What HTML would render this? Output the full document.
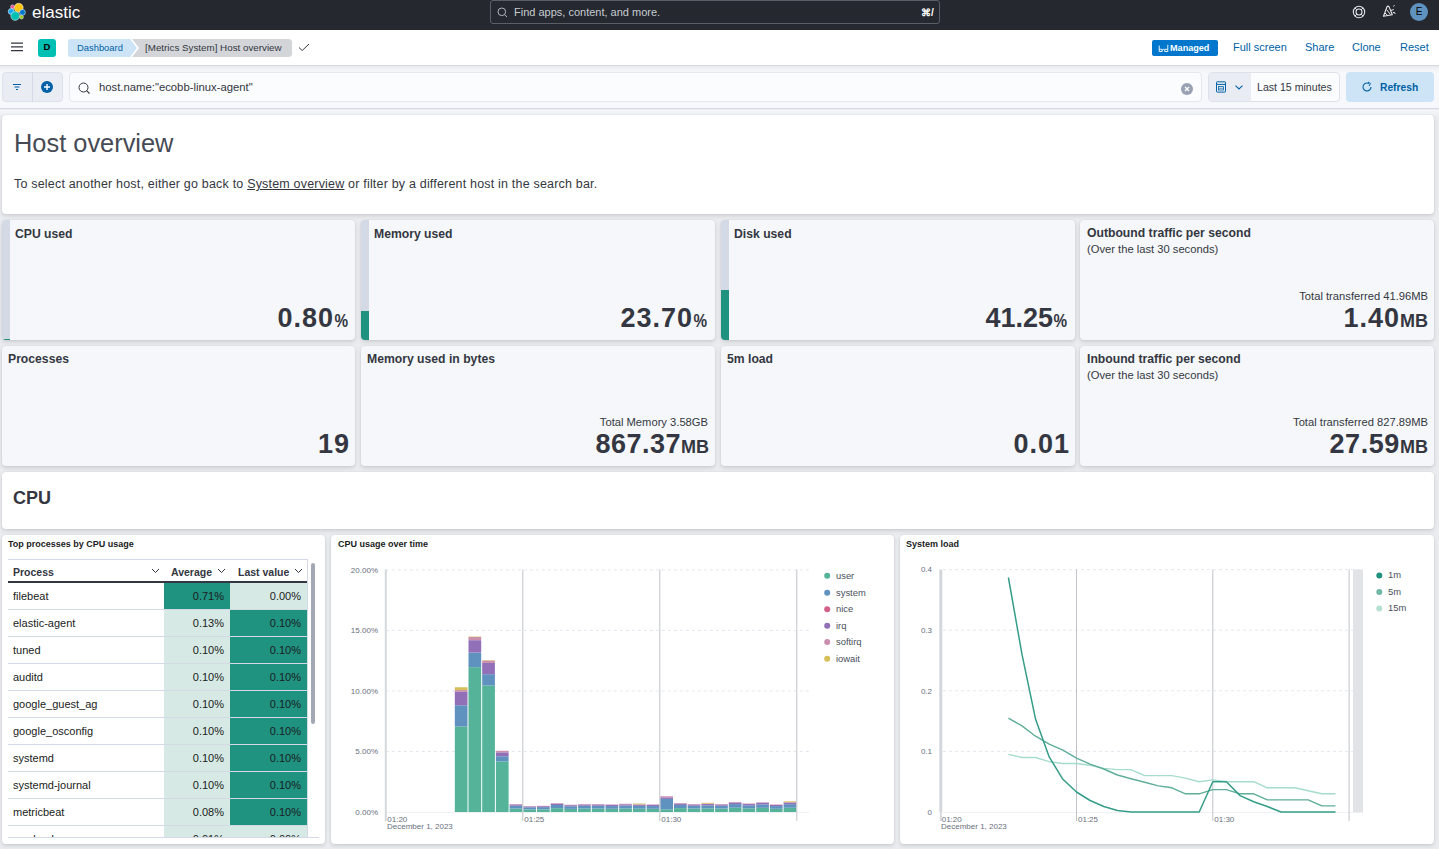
<!DOCTYPE html>
<html><head><meta charset="utf-8">
<style>
*{box-sizing:border-box;margin:0;padding:0}
html,body{width:1439px;height:849px;overflow:hidden}
body{font-family:"Liberation Sans",sans-serif;background:#eaecf0;position:relative;color:#343741}
.a{position:absolute}
.hdr{left:0;top:0;width:1439px;height:30px;background:#25282f}
.bar2{left:0;top:30px;width:1439px;height:36px;background:#fff;border-bottom:1px solid #d3dae6;}
.fbar{left:0;top:66px;width:1439px;height:43px;background:linear-gradient(#e9eaee,#f3f4f7 4px,#f7f8fc 7px);border-bottom:1px solid #d3dae6}
.panel{background:#fff;border-radius:4px;box-shadow:0 2px 4px rgba(0,0,0,.12),0 0 1.5px rgba(0,0,0,.1)}
.mp{background:#f5f7fa;border-radius:4px;box-shadow:0 2px 4px rgba(0,0,0,.13),0 0 1.5px rgba(0,0,0,.1);overflow:hidden}
.mt{position:absolute;font-weight:bold;font-size:12.2px;color:#343741;white-space:nowrap}
.mv{position:absolute;font-weight:bold;font-size:27px;color:#343741;white-space:nowrap;text-align:right}
.mv{letter-spacing:1px}
.mv small{font-size:18px;letter-spacing:0}
.mv .pc{display:inline-block;margin-left:-2px;transform:scaleX(.85);transform-origin:100% 50%}
.sub{position:absolute;font-size:11.2px;color:#343741;white-space:nowrap}
.link{position:absolute;font-size:11px;color:#0061a6;white-space:nowrap}
.th{position:absolute;top:566px;font-size:10.5px;font-weight:bold;color:#343741;white-space:nowrap}
.td{position:absolute;font-size:11px;color:#1a1c21;white-space:nowrap}
</style></head><body>

<!-- header -->
<div class="a hdr"></div>
<svg class="a" style="left:7px;top:2px" width="20" height="20" viewBox="0 0 20 20">
  <g stroke="#fff" stroke-width=".5">
  <circle cx="11.7" cy="5.8" r="4.5" fill="#fec514"/>
  <circle cx="5.5" cy="4.8" r="1.9" fill="#f04e98"/>
  <circle cx="4.2" cy="9.5" r="3" fill="#1ba9f5"/>
  <circle cx="15.5" cy="10.4" r="2.9" fill="#0077cc"/>
  <circle cx="8.2" cy="14" r="4.4" fill="#00bfb3"/>
  <circle cx="14.5" cy="15.1" r="1.9" fill="#93c90e"/>
  </g>
</svg>
<div class="a" style="left:32px;top:3px;font-size:17px;color:#fff;letter-spacing:0px">elastic</div>

<div class="a" style="left:490px;top:0px;width:450px;height:24px;border:1px solid #5a5e66;border-radius:3px;background:#25282f"></div>
<svg class="a" style="left:497px;top:7px" width="11" height="11" viewBox="0 0 11 11"><circle cx="4.8" cy="4.8" r="3.8" fill="none" stroke="#b0b4bc" stroke-width="1"/><path d="M7.6 7.6L10 10" stroke="#b0b4bc" stroke-width="1"/></svg>
<div class="a" style="left:514px;top:6px;font-size:11px;color:#c8ccd2">Find apps, content, and more.</div>
<div class="a" style="left:921px;top:7px;font-size:10px;color:#fff;font-weight:bold">&#8984;/</div>

<svg class="a" style="left:1352px;top:5px" width="14" height="14" viewBox="0 0 14 14"><circle cx="7" cy="7" r="5.7" fill="none" stroke="#dfe2e6" stroke-width="1.1"/><circle cx="7" cy="7" r="3" fill="none" stroke="#dfe2e6" stroke-width="1.1"/><path d="M3 3L4.9 4.9M11 3L9.1 4.9M3 11L4.9 9.1M11 11L9.1 9.1" stroke="#dfe2e6" stroke-width="1"/></svg>
<svg class="a" style="left:1380px;top:3px" width="18" height="18" viewBox="1380 3 18 18"><path d="M1383.5 16.3L1387 6.8Q1388 5.6 1389 6.6L1392.3 14.8Z" fill="none" stroke="#e6e8eb" stroke-width="1.1" stroke-linejoin="round"/><path d="M1386.5 9.5L1390.5 14.5M1385 13L1387.8 15.6" stroke="#e6e8eb" stroke-width="1"/><path d="M1391 10.3L1393.8 9.6M1393.2 6.3L1394.6 5.5M1392.8 12.6Q1395 11.5 1395.2 14" fill="none" stroke="#e6e8eb" stroke-width="1"/></svg>
<div class="a" style="left:1410px;top:3px;width:18px;height:18px;border-radius:50%;background:#6092c0;color:#000;font-size:10px;text-align:center;line-height:18px">E</div>

<!-- bar2 -->
<div class="a bar2"></div>
<svg class="a" style="left:10px;top:40px" width="14" height="14" viewBox="10 40 14 14"><path d="M11 43.2H23M11 46.8H23M11 50.6H23" stroke="#343741" stroke-width="1.2"/></svg>
<div class="a" style="left:38px;top:39px;width:18px;height:18px;border-radius:3px;background:#00bfb3;color:#000;font-size:9.5px;font-weight:bold;text-align:center;line-height:15.6px">D</div>
<svg class="a" style="left:68px;top:39px" width="225" height="18" viewBox="0 0 225 18">
  <path d="M3 0H62L69 9L62 18H3Q0 18 0 15V3Q0 0 3 0Z" fill="#cce4f5"/>
  <path d="M64 0H220Q224 0 224 3V15Q224 18 220 18H64L71 9Z" fill="#d3d5d9"/>
</svg>
<div class="a" style="left:77px;top:42px;font-size:9.4px;color:#0061a6">Dashboard</div>
<div class="a" style="left:145px;top:42px;font-size:9.8px;color:#343741">[Metrics System] Host overview</div>
<svg class="a" style="left:298px;top:43px" width="12" height="9" viewBox="0 0 12 9"><path d="M1 4.5L4.2 7.5L11 1" fill="none" stroke="#343741" stroke-width="1"/></svg>

<div class="a" style="left:1152px;top:40px;width:66px;height:16px;border-radius:2px;background:#0077cc"></div>
<svg class="a" style="left:1158px;top:44px" width="11" height="9" viewBox="0 0 11 9"><path d="M1.2 1.5V7.5H4.2V5.3H1.2M9.8 0.8V7.5H6.8V5.3H9.8M4.2 6.2L5.5 5.3L6.8 6.2" fill="none" stroke="#fff" stroke-width=".9"/></svg>
<div class="a" style="left:1170px;top:42px;font-size:9.1px;color:#fff;font-weight:bold;top:43px">Managed</div>
<div class="link" style="left:1233px;top:41px">Full screen</div>
<div class="link" style="left:1305px;top:41px">Share</div>
<div class="link" style="left:1352px;top:41px">Clone</div>
<div class="link" style="left:1400px;top:41px">Reset</div>

<!-- filter bar -->
<div class="a fbar"></div>
<div class="a" style="left:2px;top:72px;width:61px;height:30px;border:1px solid #dde2ea;border-radius:4px;background:#e9edf3"></div>
<div class="a" style="left:32px;top:72px;width:1px;height:30px;background:#d3dae6"></div>
<svg class="a" style="left:12px;top:82px" width="10" height="10" viewBox="0 0 10 10"><path d="M1 2.5H9M2.5 5H7.5M4 7.5H6" stroke="#0061a6" stroke-width="1"/></svg>
<svg class="a" style="left:41px;top:81px" width="12" height="12" viewBox="0 0 12 12"><circle cx="6" cy="6" r="6" fill="#0061a6"/><path d="M6 3V9M3 6H9" stroke="#fff" stroke-width="1.4"/></svg>

<div class="a" style="left:69px;top:72px;width:1133px;height:30px;border:1px solid #e3e7ee;border-radius:4px;background:#fbfcfd"></div>
<svg class="a" style="left:78px;top:82px" width="13" height="13" viewBox="0 0 13 13"><circle cx="5.5" cy="5.5" r="4.5" fill="none" stroke="#343741" stroke-width="1"/><path d="M8.6 8.6L11.5 11.5" stroke="#343741" stroke-width="1.1"/></svg>
<div class="a" style="left:99px;top:81px;font-size:11.3px;color:#343741">host.name:"ecobb-linux-agent"</div>
<svg class="a" style="left:1181px;top:83px" width="12" height="12" viewBox="0 0 12 12"><circle cx="6" cy="6" r="6" fill="#98a2b3"/><path d="M4 4L8 8M8 4L4 8" stroke="#fff" stroke-width="1.3"/></svg>

<div class="a" style="left:1208px;top:72px;width:132px;height:30px;border:1px solid #dde2ea;border-radius:4px;background:#fbfcfd;overflow:hidden"><div class="a" style="left:0;top:0;width:42px;height:30px;background:#e9edf3"></div></div>
<svg class="a" style="left:1210px;top:76px" width="40" height="20" viewBox="1210 76 40 20"><rect x="1216.5" y="81.8" width="9" height="10.3" rx=".6" fill="none" stroke="#0061a6" stroke-width="1"/><path d="M1216.5 84.4H1225.5" stroke="#0061a6" stroke-width="1"/><rect x="1218.6" y="86.6" width="4.8" height="3.4" fill="none" stroke="#0061a6" stroke-width=".8"/><path d="M1218.6 88.3H1223.4" stroke="#0061a6" stroke-width=".6"/><path d="M1235.5 85.6L1239 88.9L1242.5 85.6" fill="none" stroke="#0061a6" stroke-width="1.1"/></svg>
<div class="a" style="left:1257px;top:81px;font-size:10.6px;color:#343741">Last 15 minutes</div>
<div class="a" style="left:1346px;top:72px;width:88px;height:30px;border-radius:4px;background:#cce4f5"></div>
<svg class="a" style="left:1361px;top:81px" width="12" height="12" viewBox="0 0 12 12"><path d="M10 6A4 4 0 1 1 8 2.5" fill="none" stroke="#0061a6" stroke-width="1.1"/><path d="M7 1L9.5 2.5L8 5" fill="none" stroke="#0061a6" stroke-width="1"/></svg>
<div class="a" style="left:1380px;top:82px;font-size:10.25px;color:#0061a6;font-weight:bold">Refresh</div>

<!-- host overview panel -->
<div class="a" style="left:0;top:110px;width:1439px;height:6px;background:linear-gradient(#f5f6f9,#eceef2)"></div>
<div class="a panel" style="left:2px;top:115px;width:1432px;height:99px"></div>
<div class="a" style="left:14px;top:129px;font-size:25.4px;color:#464a54">Host overview</div>
<div class="a" style="left:14px;top:177px;font-size:12.5px;letter-spacing:0.19px;color:#343741">To select another host, either go back to <span style="text-decoration:underline">System overview</span> or filter by a different host in the search bar.</div>


<!-- metric row 1 -->
<div class="a mp" style="left:2px;top:220px;width:353px;height:120px">
  <div class="a" style="left:0;top:0;width:8px;height:120px;background:#d3dae6"></div>
  <div class="a" style="left:0;top:119px;width:8px;height:1px;background:#209280"></div>
</div>
<div class="mt" style="left:15px;top:227px">CPU used</div>
<div class="mv" style="right:1091px;top:303px">0.80<small class="pc">%</small></div>

<div class="a mp" style="left:361px;top:220px;width:354px;height:120px">
  <div class="a" style="left:0;top:0;width:8px;height:120px;background:#d3dae6"></div>
  <div class="a" style="left:0;top:91px;width:8px;height:29px;background:#209280"></div>
</div>
<div class="mt" style="left:374px;top:227px">Memory used</div>
<div class="mv" style="right:732px;top:303px">23.70<small class="pc">%</small></div>

<div class="a mp" style="left:721px;top:220px;width:354px;height:120px">
  <div class="a" style="left:0;top:0;width:8px;height:120px;background:#d3dae6"></div>
  <div class="a" style="left:0;top:70px;width:8px;height:50px;background:#209280"></div>
</div>
<div class="mt" style="left:734px;top:226.5px">Disk used</div>
<div class="mv" style="right:372px;top:303px;letter-spacing:0">41.25<small class="pc">%</small></div>

<div class="a mp" style="left:1080px;top:220px;width:354px;height:120px"></div>
<div class="mt" style="left:1087px;top:226px">Outbound traffic per second</div>
<div class="sub" style="left:1087px;top:243px">(Over the last 30 seconds)</div>
<div class="sub" style="right:11px;top:290px">Total transferred 41.96MB</div>
<div class="mv" style="right:11px;top:303px">1.40<small>MB</small></div>

<!-- metric row 2 -->
<div class="a mp" style="left:2px;top:346px;width:353px;height:120px"></div>
<div class="mt" style="left:8px;top:352px">Processes</div>
<div class="mv" style="right:1089px;top:429px">19</div>

<div class="a mp" style="left:361px;top:346px;width:354px;height:120px"></div>
<div class="mt" style="left:367px;top:352px">Memory used in bytes</div>
<div class="sub" style="right:731px;top:416px">Total Memory 3.58GB</div>
<div class="mv" style="right:730px;top:429px;letter-spacing:0.5px">867.37<small>MB</small></div>

<div class="a mp" style="left:721px;top:346px;width:354px;height:120px"></div>
<div class="mt" style="left:727px;top:352px">5m load</div>
<div class="mv" style="right:369px;top:429px">0.01</div>

<div class="a mp" style="left:1080px;top:346px;width:354px;height:120px"></div>
<div class="mt" style="left:1087px;top:352px">Inbound traffic per second</div>
<div class="sub" style="left:1087px;top:369px">(Over the last 30 seconds)</div>
<div class="sub" style="right:11px;top:416px">Total transferred 827.89MB</div>
<div class="mv" style="right:11px;top:429px;letter-spacing:0.6px">27.59<small>MB</small></div>

<!-- CPU header panel -->
<div class="a panel" style="left:2px;top:472px;width:1432px;height:57px"></div>
<div class="a" style="left:13px;top:488px;font-size:18px;font-weight:bold;color:#343741">CPU</div>

<!-- bottom panels -->
<div class="a panel" style="left:2px;top:535px;width:323px;height:309px"></div>
<div class="a panel" style="left:331px;top:535px;width:563px;height:309px"></div>
<div class="a panel" style="left:900px;top:535px;width:534px;height:309px"></div>
<div class="mt" style="left:8px;top:539px;font-size:9px;color:#1a1c21">Top processes by CPU usage</div>
<div class="mt" style="left:338px;top:539px;font-size:9px;color:#1a1c21">CPU usage over time</div>
<div class="mt" style="left:906px;top:539px;font-size:9px;color:#1a1c21">System load</div>

<!-- table -->
<div class="a" style="left:8px;top:559px;width:300px;height:1px;background:#d3dae6"></div>
<div class="a" style="left:307px;top:559px;width:1px;height:279px;background:#d3dae6"></div>
<div class="th" style="left:13px">Process</div>
<svg class="a" style="left:151px;top:568px" width="9" height="6" viewBox="0 0 9 6"><path d="M1 1L4.5 4.5L8 1" fill="none" stroke="#343741" stroke-width="1"/></svg>
<div class="th" style="left:171px">Average</div>
<svg class="a" style="left:217px;top:568px" width="9" height="6" viewBox="0 0 9 6"><path d="M1 1L4.5 4.5L8 1" fill="none" stroke="#343741" stroke-width="1"/></svg>
<div class="th" style="left:238px">Last value</div>
<svg class="a" style="left:294px;top:568px" width="9" height="6" viewBox="0 0 9 6"><path d="M1 1L4.5 4.5L8 1" fill="none" stroke="#343741" stroke-width="1"/></svg>
<div class="a" style="left:8px;top:581px;width:299px;height:2px;background:#343741"></div>
<div class="a" style="left:8px;top:583px;width:299px;height:254px;overflow:hidden">
<div class="a" style="left:0;top:26px;width:299px;height:1px;background:#d3dae6"></div>
<div class="a" style="left:156px;top:0px;width:66px;height:26px;background:#209280"></div>
<div class="a" style="left:222px;top:0px;width:77px;height:26px;background:#d6e9e4"></div>
<div class="td" style="left:5px;top:7px">filebeat</div>
<div class="td" style="right:83px;top:7px">0.71%</div>
<div class="td" style="right:6px;top:7px">0.00%</div>
<div class="a" style="left:0;top:53px;width:299px;height:1px;background:#d3dae6"></div>
<div class="a" style="left:156px;top:27px;width:66px;height:26px;background:#d6e9e4"></div>
<div class="a" style="left:222px;top:27px;width:77px;height:26px;background:#209280"></div>
<div class="td" style="left:5px;top:34px">elastic-agent</div>
<div class="td" style="right:83px;top:34px">0.13%</div>
<div class="td" style="right:6px;top:34px">0.10%</div>
<div class="a" style="left:0;top:80px;width:299px;height:1px;background:#d3dae6"></div>
<div class="a" style="left:156px;top:54px;width:66px;height:26px;background:#d6e9e4"></div>
<div class="a" style="left:222px;top:54px;width:77px;height:26px;background:#209280"></div>
<div class="td" style="left:5px;top:61px">tuned</div>
<div class="td" style="right:83px;top:61px">0.10%</div>
<div class="td" style="right:6px;top:61px">0.10%</div>
<div class="a" style="left:0;top:107px;width:299px;height:1px;background:#d3dae6"></div>
<div class="a" style="left:156px;top:81px;width:66px;height:26px;background:#d6e9e4"></div>
<div class="a" style="left:222px;top:81px;width:77px;height:26px;background:#209280"></div>
<div class="td" style="left:5px;top:88px">auditd</div>
<div class="td" style="right:83px;top:88px">0.10%</div>
<div class="td" style="right:6px;top:88px">0.10%</div>
<div class="a" style="left:0;top:134px;width:299px;height:1px;background:#d3dae6"></div>
<div class="a" style="left:156px;top:108px;width:66px;height:26px;background:#d6e9e4"></div>
<div class="a" style="left:222px;top:108px;width:77px;height:26px;background:#209280"></div>
<div class="td" style="left:5px;top:115px">google_guest_ag</div>
<div class="td" style="right:83px;top:115px">0.10%</div>
<div class="td" style="right:6px;top:115px">0.10%</div>
<div class="a" style="left:0;top:161px;width:299px;height:1px;background:#d3dae6"></div>
<div class="a" style="left:156px;top:135px;width:66px;height:26px;background:#d6e9e4"></div>
<div class="a" style="left:222px;top:135px;width:77px;height:26px;background:#209280"></div>
<div class="td" style="left:5px;top:142px">google_osconfig</div>
<div class="td" style="right:83px;top:142px">0.10%</div>
<div class="td" style="right:6px;top:142px">0.10%</div>
<div class="a" style="left:0;top:188px;width:299px;height:1px;background:#d3dae6"></div>
<div class="a" style="left:156px;top:162px;width:66px;height:26px;background:#d6e9e4"></div>
<div class="a" style="left:222px;top:162px;width:77px;height:26px;background:#209280"></div>
<div class="td" style="left:5px;top:169px">systemd</div>
<div class="td" style="right:83px;top:169px">0.10%</div>
<div class="td" style="right:6px;top:169px">0.10%</div>
<div class="a" style="left:0;top:215px;width:299px;height:1px;background:#d3dae6"></div>
<div class="a" style="left:156px;top:189px;width:66px;height:26px;background:#d6e9e4"></div>
<div class="a" style="left:222px;top:189px;width:77px;height:26px;background:#209280"></div>
<div class="td" style="left:5px;top:196px">systemd-journal</div>
<div class="td" style="right:83px;top:196px">0.10%</div>
<div class="td" style="right:6px;top:196px">0.10%</div>
<div class="a" style="left:0;top:242px;width:299px;height:1px;background:#d3dae6"></div>
<div class="a" style="left:156px;top:216px;width:66px;height:26px;background:#d6e9e4"></div>
<div class="a" style="left:222px;top:216px;width:77px;height:26px;background:#209280"></div>
<div class="td" style="left:5px;top:223px">metricbeat</div>
<div class="td" style="right:83px;top:223px">0.08%</div>
<div class="td" style="right:6px;top:223px">0.10%</div>
<div class="a" style="left:0;top:269px;width:299px;height:1px;background:#d3dae6"></div>
<div class="a" style="left:156px;top:243px;width:66px;height:26px;background:#d6e9e4"></div>
<div class="a" style="left:222px;top:243px;width:77px;height:26px;background:#d6e9e4"></div>
<div class="td" style="left:5px;top:250px">rsyslogd</div>
<div class="td" style="right:83px;top:250px">0.01%</div>
<div class="td" style="right:6px;top:250px">0.00%</div>
</div>
<div class="a" style="left:8px;top:837px;width:311px;height:1px;background:#d3dae6"></div>
<div class="a" style="left:311px;top:563px;width:4px;height:161px;border-radius:2px;background:#a2a9b4"></div>
<!-- cpu chart -->
<svg class="a" style="left:331px;top:535px" width="563" height="309" viewBox="331 535 563 309">
<line x1="385.8" y1="570.0" x2="809" y2="570.0" stroke="#e4e7ed" stroke-width="1" stroke-dasharray="3 3"/>
<text x="378" y="572.8" text-anchor="end" font-size="8" fill="#69707d">20.00%</text>
<line x1="385.8" y1="630.5" x2="809" y2="630.5" stroke="#e4e7ed" stroke-width="1" stroke-dasharray="3 3"/>
<text x="378" y="633.3" text-anchor="end" font-size="8" fill="#69707d">15.00%</text>
<line x1="385.8" y1="691.0" x2="809" y2="691.0" stroke="#e4e7ed" stroke-width="1" stroke-dasharray="3 3"/>
<text x="378" y="693.8" text-anchor="end" font-size="8" fill="#69707d">10.00%</text>
<line x1="385.8" y1="751.5" x2="809" y2="751.5" stroke="#e4e7ed" stroke-width="1" stroke-dasharray="3 3"/>
<text x="378" y="754.3" text-anchor="end" font-size="8" fill="#69707d">5.00%</text>
<line x1="385.8" y1="812.5" x2="809" y2="812.5" stroke="#eef0f3" stroke-width="1"/>
<text x="378" y="814.8" text-anchor="end" font-size="8" fill="#69707d">0.00%</text>
<rect x="454.80" y="726.45" width="12.70" height="85.55" fill="#54b399"/>
<rect x="454.80" y="705.28" width="12.70" height="21.18" fill="#6092c0"/>
<rect x="454.80" y="691.85" width="12.70" height="13.43" fill="#9170b8"/>
<rect x="454.80" y="690.03" width="12.70" height="1.82" fill="#ca8eae"/>
<rect x="454.80" y="687.25" width="12.70" height="2.78" fill="#d6bf57"/>
<rect x="468.50" y="667.16" width="12.70" height="144.84" fill="#54b399"/>
<rect x="468.50" y="652.52" width="12.70" height="14.64" fill="#6092c0"/>
<rect x="468.50" y="640.18" width="12.70" height="12.34" fill="#9170b8"/>
<rect x="468.50" y="637.03" width="12.70" height="3.15" fill="#ca8eae"/>
<rect x="468.50" y="636.55" width="12.70" height="0.48" fill="#d6bf57"/>
<rect x="482.20" y="685.56" width="12.70" height="126.44" fill="#54b399"/>
<rect x="482.20" y="674.18" width="12.70" height="11.37" fill="#6092c0"/>
<rect x="482.20" y="662.93" width="12.70" height="11.25" fill="#9170b8"/>
<rect x="482.20" y="660.51" width="12.70" height="2.42" fill="#ca8eae"/>
<rect x="482.20" y="660.14" width="12.70" height="0.36" fill="#d6bf57"/>
<rect x="495.90" y="761.42" width="12.70" height="50.58" fill="#54b399"/>
<rect x="495.90" y="756.22" width="12.70" height="5.20" fill="#6092c0"/>
<rect x="495.90" y="752.35" width="12.70" height="3.87" fill="#9170b8"/>
<rect x="495.90" y="750.77" width="12.70" height="1.57" fill="#ca8eae"/>
<rect x="509.60" y="808.57" width="12.70" height="3.43" fill="#54b399"/>
<rect x="509.60" y="805.69" width="12.70" height="2.87" fill="#6092c0"/>
<rect x="509.60" y="804.49" width="12.70" height="1.20" fill="#9170b8"/>
<rect x="509.60" y="804.01" width="12.70" height="0.48" fill="#ca8eae"/>
<rect x="523.30" y="809.45" width="12.70" height="2.55" fill="#54b399"/>
<rect x="523.30" y="807.32" width="12.70" height="2.13" fill="#6092c0"/>
<rect x="523.30" y="806.43" width="12.70" height="0.89" fill="#9170b8"/>
<rect x="523.30" y="806.07" width="12.70" height="0.36" fill="#ca8eae"/>
<rect x="537.00" y="809.35" width="12.70" height="2.65" fill="#54b399"/>
<rect x="537.00" y="807.12" width="12.70" height="2.22" fill="#6092c0"/>
<rect x="537.00" y="806.20" width="12.70" height="0.93" fill="#9170b8"/>
<rect x="537.00" y="805.83" width="12.70" height="0.37" fill="#ca8eae"/>
<rect x="550.70" y="808.20" width="12.70" height="3.80" fill="#54b399"/>
<rect x="550.70" y="805.02" width="12.70" height="3.18" fill="#6092c0"/>
<rect x="550.70" y="803.70" width="12.70" height="1.32" fill="#9170b8"/>
<rect x="550.70" y="803.17" width="12.70" height="0.53" fill="#ca8eae"/>
<rect x="564.40" y="808.88" width="12.70" height="3.12" fill="#54b399"/>
<rect x="564.40" y="806.26" width="12.70" height="2.61" fill="#6092c0"/>
<rect x="564.40" y="805.18" width="12.70" height="1.09" fill="#9170b8"/>
<rect x="564.40" y="804.74" width="12.70" height="0.44" fill="#ca8eae"/>
<rect x="578.10" y="808.57" width="12.70" height="3.43" fill="#54b399"/>
<rect x="578.10" y="805.69" width="12.70" height="2.87" fill="#6092c0"/>
<rect x="578.10" y="804.49" width="12.70" height="1.20" fill="#9170b8"/>
<rect x="578.10" y="804.01" width="12.70" height="0.48" fill="#ca8eae"/>
<rect x="591.80" y="808.57" width="12.70" height="3.43" fill="#54b399"/>
<rect x="591.80" y="805.69" width="12.70" height="2.87" fill="#6092c0"/>
<rect x="591.80" y="804.49" width="12.70" height="1.20" fill="#9170b8"/>
<rect x="591.80" y="804.01" width="12.70" height="0.48" fill="#ca8eae"/>
<rect x="605.50" y="808.77" width="12.70" height="3.23" fill="#54b399"/>
<rect x="605.50" y="806.07" width="12.70" height="2.70" fill="#6092c0"/>
<rect x="605.50" y="804.95" width="12.70" height="1.13" fill="#9170b8"/>
<rect x="605.50" y="804.50" width="12.70" height="0.45" fill="#ca8eae"/>
<rect x="619.20" y="808.46" width="12.70" height="3.54" fill="#54b399"/>
<rect x="619.20" y="805.50" width="12.70" height="2.96" fill="#6092c0"/>
<rect x="619.20" y="804.27" width="12.70" height="1.23" fill="#9170b8"/>
<rect x="619.20" y="803.77" width="12.70" height="0.49" fill="#ca8eae"/>
<rect x="632.90" y="808.67" width="12.70" height="3.33" fill="#54b399"/>
<rect x="632.90" y="805.88" width="12.70" height="2.79" fill="#6092c0"/>
<rect x="632.90" y="804.72" width="12.70" height="1.16" fill="#9170b8"/>
<rect x="632.90" y="804.26" width="12.70" height="0.46" fill="#ca8eae"/>
<rect x="632.90" y="803.53" width="12.70" height="0.73" fill="#d6bf57"/>
<rect x="646.60" y="808.77" width="12.70" height="3.23" fill="#54b399"/>
<rect x="646.60" y="806.07" width="12.70" height="2.70" fill="#6092c0"/>
<rect x="646.60" y="804.95" width="12.70" height="1.13" fill="#9170b8"/>
<rect x="646.60" y="804.50" width="12.70" height="0.45" fill="#ca8eae"/>
<rect x="660.30" y="809.34" width="12.70" height="2.66" fill="#54b399"/>
<rect x="660.30" y="798.93" width="12.70" height="10.41" fill="#6092c0"/>
<rect x="660.30" y="797.36" width="12.70" height="1.57" fill="#9170b8"/>
<rect x="660.30" y="796.27" width="12.70" height="1.09" fill="#ca8eae"/>
<rect x="674.00" y="808.15" width="12.70" height="3.85" fill="#54b399"/>
<rect x="674.00" y="804.93" width="12.70" height="3.22" fill="#6092c0"/>
<rect x="674.00" y="803.58" width="12.70" height="1.34" fill="#9170b8"/>
<rect x="674.00" y="803.05" width="12.70" height="0.54" fill="#ca8eae"/>
<rect x="687.70" y="808.57" width="12.70" height="3.43" fill="#54b399"/>
<rect x="687.70" y="805.69" width="12.70" height="2.87" fill="#6092c0"/>
<rect x="687.70" y="804.49" width="12.70" height="1.20" fill="#9170b8"/>
<rect x="687.70" y="804.01" width="12.70" height="0.48" fill="#ca8eae"/>
<rect x="701.40" y="808.36" width="12.70" height="3.64" fill="#54b399"/>
<rect x="701.40" y="805.31" width="12.70" height="3.05" fill="#6092c0"/>
<rect x="701.40" y="804.04" width="12.70" height="1.27" fill="#9170b8"/>
<rect x="701.40" y="803.53" width="12.70" height="0.51" fill="#ca8eae"/>
<rect x="701.40" y="802.80" width="12.70" height="0.73" fill="#d6bf57"/>
<rect x="715.10" y="808.57" width="12.70" height="3.43" fill="#54b399"/>
<rect x="715.10" y="805.69" width="12.70" height="2.87" fill="#6092c0"/>
<rect x="715.10" y="804.49" width="12.70" height="1.20" fill="#9170b8"/>
<rect x="715.10" y="804.01" width="12.70" height="0.48" fill="#ca8eae"/>
<rect x="728.80" y="807.68" width="12.70" height="4.32" fill="#54b399"/>
<rect x="728.80" y="804.07" width="12.70" height="3.62" fill="#6092c0"/>
<rect x="728.80" y="802.56" width="12.70" height="1.51" fill="#9170b8"/>
<rect x="728.80" y="801.96" width="12.70" height="0.60" fill="#ca8eae"/>
<rect x="742.50" y="808.36" width="12.70" height="3.64" fill="#54b399"/>
<rect x="742.50" y="805.31" width="12.70" height="3.05" fill="#6092c0"/>
<rect x="742.50" y="804.04" width="12.70" height="1.27" fill="#9170b8"/>
<rect x="742.50" y="803.53" width="12.70" height="0.51" fill="#ca8eae"/>
<rect x="756.20" y="807.84" width="12.70" height="4.16" fill="#54b399"/>
<rect x="756.20" y="804.35" width="12.70" height="3.48" fill="#6092c0"/>
<rect x="756.20" y="802.90" width="12.70" height="1.45" fill="#9170b8"/>
<rect x="756.20" y="802.32" width="12.70" height="0.58" fill="#ca8eae"/>
<rect x="769.90" y="808.77" width="12.70" height="3.23" fill="#54b399"/>
<rect x="769.90" y="806.07" width="12.70" height="2.70" fill="#6092c0"/>
<rect x="769.90" y="804.95" width="12.70" height="1.13" fill="#9170b8"/>
<rect x="769.90" y="804.50" width="12.70" height="0.45" fill="#ca8eae"/>
<rect x="783.60" y="807.73" width="12.70" height="4.27" fill="#54b399"/>
<rect x="783.60" y="804.16" width="12.70" height="3.57" fill="#6092c0"/>
<rect x="783.60" y="802.67" width="12.70" height="1.49" fill="#9170b8"/>
<rect x="783.60" y="802.08" width="12.70" height="0.60" fill="#ca8eae"/>
<rect x="783.60" y="801.35" width="12.70" height="0.73" fill="#d6bf57"/>
<line x1="385.8" y1="569.5" x2="385.8" y2="821" stroke="#d5d8dd" stroke-width="2"/>
<line x1="522.8" y1="569.5" x2="522.8" y2="821" stroke="#c0c3c8" stroke-width="1"/>
<line x1="659.8" y1="569.5" x2="659.8" y2="821" stroke="#c0c3c8" stroke-width="1"/>
<line x1="796.8" y1="569.5" x2="796.8" y2="821" stroke="#c0c3c8" stroke-width="1"/>
<text x="387.3" y="822" font-size="8" fill="#69707d">01:20</text>
<text x="524.3" y="822" font-size="8" fill="#69707d">01:25</text>
<text x="661.3" y="822" font-size="8" fill="#69707d">01:30</text>
<text x="387" y="829" font-size="8" fill="#69707d">December 1, 2023</text>
<circle cx="827.2" cy="575.8" r="3" fill="#54b399"/>
<text x="836" y="578.8" font-size="9.4" fill="#4a4f5a">user</text>
<circle cx="827.2" cy="592.8" r="3" fill="#6092c0"/>
<text x="836" y="595.8" font-size="9.4" fill="#4a4f5a">system</text>
<circle cx="827.2" cy="609.2" r="3" fill="#d36086"/>
<text x="836" y="612.2" font-size="9.4" fill="#4a4f5a">nice</text>
<circle cx="827.2" cy="625.8" r="3" fill="#9170b8"/>
<text x="836" y="628.8" font-size="9.4" fill="#4a4f5a">irq</text>
<circle cx="827.2" cy="642" r="3" fill="#ca8eae"/>
<text x="836" y="645" font-size="9.4" fill="#4a4f5a">softirq</text>
<circle cx="827.2" cy="658.8" r="3" fill="#d6bf57"/>
<text x="836" y="661.8" font-size="9.4" fill="#4a4f5a">iowait</text>
</svg>
<!-- load chart -->
<svg class="a" style="left:900px;top:535px" width="534" height="309" viewBox="900 535 534 309">
<line x1="943" y1="569.6" x2="1363" y2="569.6" stroke="#e4e7ed" stroke-width="1" stroke-dasharray="3 3"/>
<text x="932" y="572.4" text-anchor="end" font-size="8" fill="#69707d">0.4</text>
<line x1="943" y1="630.2" x2="1363" y2="630.2" stroke="#e4e7ed" stroke-width="1" stroke-dasharray="3 3"/>
<text x="932" y="633.0" text-anchor="end" font-size="8" fill="#69707d">0.3</text>
<line x1="943" y1="690.8" x2="1363" y2="690.8" stroke="#e4e7ed" stroke-width="1" stroke-dasharray="3 3"/>
<text x="932" y="693.5999999999999" text-anchor="end" font-size="8" fill="#69707d">0.2</text>
<line x1="943" y1="751.4" x2="1363" y2="751.4" stroke="#e4e7ed" stroke-width="1" stroke-dasharray="3 3"/>
<text x="932" y="754.1999999999999" text-anchor="end" font-size="8" fill="#69707d">0.1</text>
<line x1="943" y1="812.5" x2="1363" y2="812.5" stroke="#eef0f3" stroke-width="1"/>
<text x="932" y="814.8" text-anchor="end" font-size="8" fill="#69707d">0</text>
<rect x="939.3" y="569.5" width="3" height="242.5" fill="#d3d6db"/>
<line x1="940.8" y1="812" x2="940.8" y2="821" stroke="#d5d8dd" stroke-width="2"/>
<rect x="1353" y="569.5" width="10" height="242.5" fill="#e1e3e7"/>
<line x1="1076.5" y1="569.5" x2="1076.5" y2="821" stroke="#c0c3c8" stroke-width="1"/>
<line x1="1212.8" y1="569.5" x2="1212.8" y2="821" stroke="#c0c3c8" stroke-width="1"/>
<line x1="1349.1" y1="569.5" x2="1349.1" y2="821" stroke="#c0c3c8" stroke-width="1"/>
<text x="941.7" y="822" font-size="8" fill="#69707d">01:20</text>
<text x="1078.0" y="822" font-size="8" fill="#69707d">01:25</text>
<text x="1214.3" y="822" font-size="8" fill="#69707d">01:30</text>
<text x="941" y="829" font-size="8" fill="#69707d">December 1, 2023</text>
<path d="M1008.4 754.4 L1022.0 757.5 L1035.6 757.5 L1049.2 761.7 L1062.9 763.5 L1076.5 763.5 L1090.1 765.3 L1103.8 768.4 L1117.4 769.6 L1131.0 769.6 L1144.7 775.6 L1158.3 775.6 L1171.9 775.6 L1185.5 778.1 L1199.2 781.7 L1212.8 779.9 L1226.4 781.7 L1240.1 781.7 L1253.7 781.7 L1267.3 787.8 L1281.0 787.8 L1294.6 787.8 L1308.2 790.8 L1321.8 793.8 L1335.5 793.8" fill="none" stroke="#a6dccd" stroke-width="1.4" stroke-linejoin="round"/>
<path d="M1008.4 718.1 L1022.0 725.9 L1035.6 736.2 L1049.2 744.1 L1062.9 750.2 L1076.5 758.1 L1090.1 764.1 L1103.8 769.0 L1117.4 775.0 L1131.0 778.7 L1144.7 782.3 L1158.3 785.9 L1171.9 787.8 L1185.5 793.8 L1199.2 793.8 L1212.8 789.6 L1226.4 789.6 L1240.1 793.8 L1253.7 793.8 L1267.3 799.9 L1281.0 799.9 L1294.6 799.9 L1308.2 799.9 L1321.8 805.9 L1335.5 805.9" fill="none" stroke="#5fae9a" stroke-width="1.4" stroke-linejoin="round"/>
<path d="M1008.4 577.5 L1022.0 654.4 L1035.6 719.3 L1049.2 756.9 L1062.9 779.3 L1076.5 792.0 L1090.1 800.5 L1103.8 806.5 L1117.4 810.5 L1131.0 812.0 L1144.7 812.0 L1158.3 812.0 L1171.9 812.0 L1185.5 812.0 L1199.2 812.0 L1212.8 781.7 L1226.4 781.7 L1240.1 795.6 L1253.7 801.7 L1267.3 806.5 L1281.0 812.0 L1294.6 812.0 L1308.2 812.0 L1321.8 812.0 L1335.5 812.0" fill="none" stroke="#359d89" stroke-width="1.5" stroke-linejoin="round"/>
<circle cx="1379.3" cy="575.4" r="3" fill="#209280"/>
<text x="1388" y="578.4" font-size="9.4" fill="#4a4f5a">1m</text>
<circle cx="1379.3" cy="592" r="3" fill="#6eb8a5"/>
<text x="1388" y="595" font-size="9.4" fill="#4a4f5a">5m</text>
<circle cx="1379.3" cy="608.4" r="3" fill="#b6e0d4"/>
<text x="1388" y="611.4" font-size="9.4" fill="#4a4f5a">15m</text>
</svg>
</body></html>
